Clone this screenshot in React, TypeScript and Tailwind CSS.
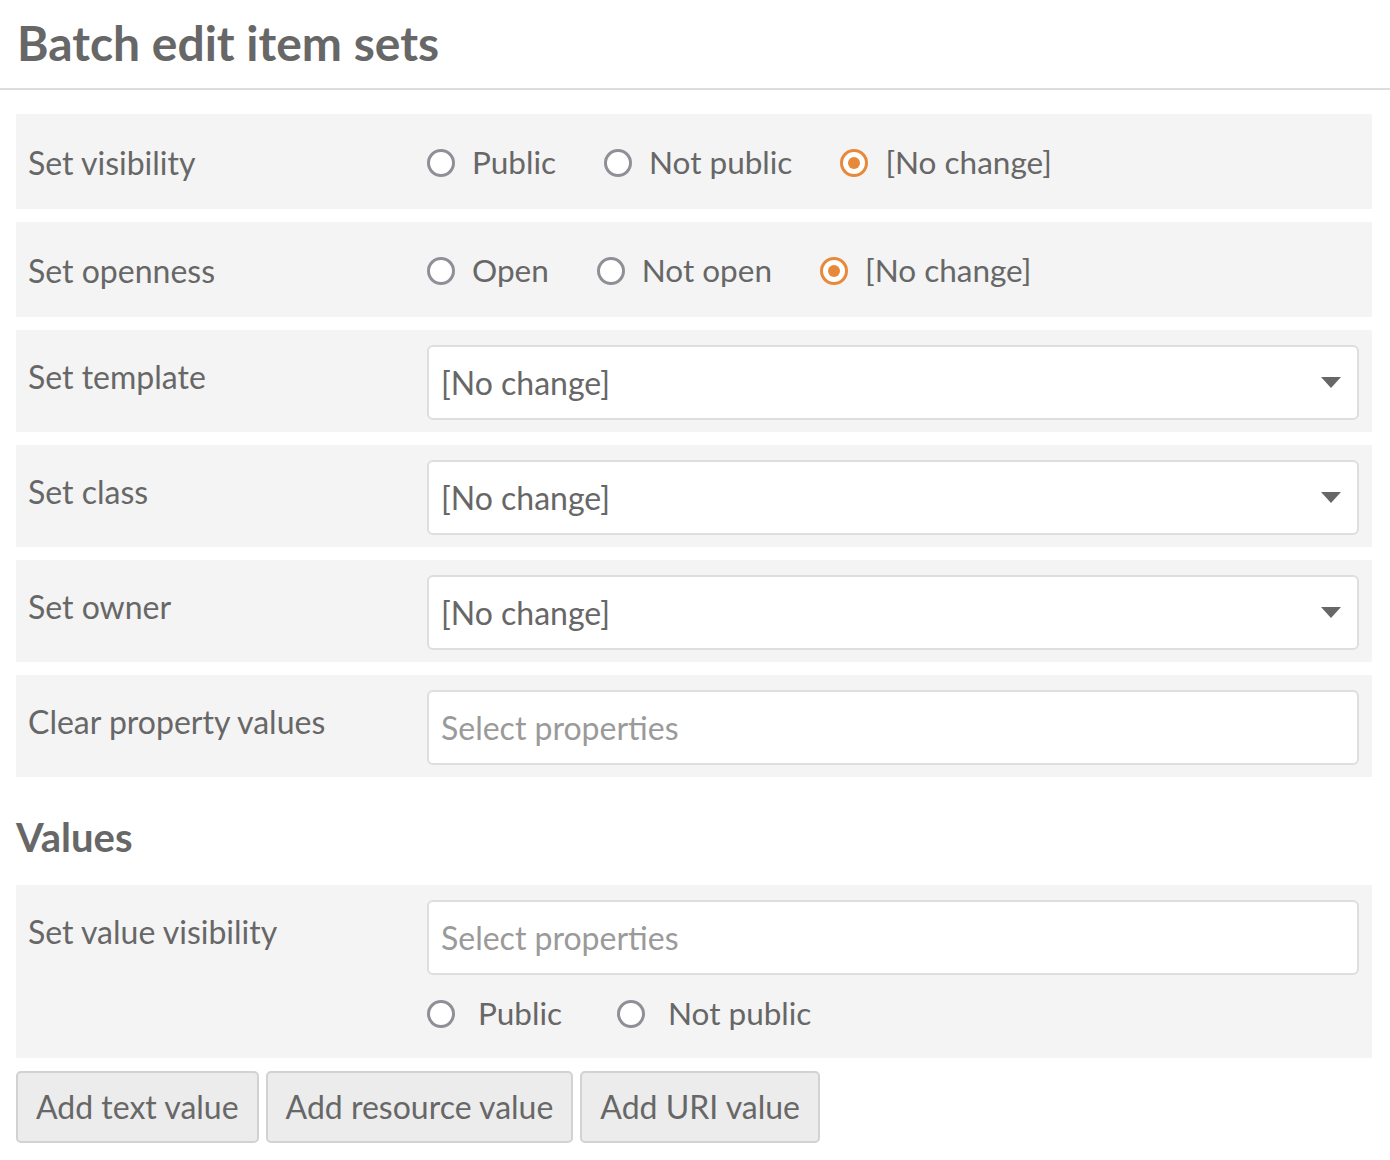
import React from 'react';

const FONT = { fontFamily: 'Lato, "Open Sans", sans-serif' };

function Radio({ label, checked, gap = 'gap-[17px]' }: { label: string; checked?: boolean; gap?: string }) {
  return (
    <label className={`flex items-center ${gap}`}>
      {checked ? (
        <span className="flex h-[28px] w-[28px] items-center justify-center rounded-full border-[3px] border-[#e8893a] bg-white">
          <span className="h-[12px] w-[12px] rounded-full bg-[#e8893a]" />
        </span>
      ) : (
        <span className="h-[28px] w-[28px] rounded-full border-[3px] border-[#8f8f98] bg-white" />
      )}
      <span className="text-[31.5px] leading-none text-[#676767]">{label}</span>
    </label>
  );
}

function Select() {
  return (
    <div className="flex h-[75px] flex-1 items-center justify-between rounded-[6px] border-2 border-[#dedede] bg-white pl-[12px] pr-[16px]">
      <span className="text-[32px] text-[#676767]">[No change]</span>
      <svg width="20" height="12" viewBox="0 0 20 12">
        <path d="M0 0 H20 L10 11 Z" fill="#676767" />
      </svg>
    </div>
  );
}

function Multi() {
  return (
    <div className="flex h-[75px] items-center rounded-[6px] border-2 border-[#dedede] bg-white pl-[12px]">
      <span className="text-[32px] text-[#9a9a9a]">Select properties</span>
    </div>
  );
}

function Row({ label, children, radio }: { label: string; children: React.ReactNode; radio?: boolean }) {
  if (radio) {
    return (
      <div className="flex h-[95px] items-center bg-[#f4f4f4] pl-[12px] pr-[13px] pt-[3px]">
        <div className="w-[399px] text-[32px] text-[#676767]">{label}</div>
        <div className="flex items-center gap-[48px]">{children}</div>
      </div>
    );
  }
  return (
    <div className="flex bg-[#f4f4f4] pb-[12px] pl-[12px] pr-[13px] pt-[15px]">
      <div className="w-[399px] pt-[14px] text-[32px] leading-[36px] text-[#676767]">{label}</div>
      <div className="flex-1">{children}</div>
    </div>
  );
}

function Button({ label }: { label: string }) {
  return (
    <button className="h-[72px] rounded-[5px] border-2 border-[#d2d2d2] bg-[#ececec] px-[18px] text-[32px] text-[#676767]">
      {label}
    </button>
  );
}

export default function App() {
  return (
    <div className="min-h-[1160px] bg-white" style={FONT}>
      <div className="border-b-2 border-[#dddddd] pb-[16px] pl-[17px] pt-[14px]">
        <h1 className="text-[48px] font-bold leading-[58px] text-[#676767]">Batch edit item sets</h1>
      </div>
      <div className="pl-[16px] pr-[18px] pt-[24px]">
        <div className="flex flex-col gap-[13px]">
          <Row label="Set visibility" radio>
            <Radio label="Public" />
            <Radio label="Not public" />
            <Radio label="[No change]" checked />
          </Row>
          <Row label="Set openness" radio>
            <Radio label="Open" />
            <Radio label="Not open" />
            <Radio label="[No change]" checked />
          </Row>
          <Row label="Set template">
            <div className="flex"><Select /></div>
          </Row>
          <Row label="Set class">
            <div className="flex"><Select /></div>
          </Row>
          <Row label="Set owner">
            <div className="flex"><Select /></div>
          </Row>
          <Row label="Clear property values">
            <Multi />
          </Row>
        </div>
        <h2 className="pb-[24px] pt-[36px] text-[40px] font-bold leading-[48px] text-[#676767]">Values</h2>
        <div className="flex bg-[#f4f4f4] pb-[28px] pl-[12px] pr-[13px] pt-[15px]">
          <div className="w-[399px] pt-[14px] text-[32px] leading-[36px] text-[#676767]">Set value visibility</div>
          <div className="flex-1">
            <Multi />
            <div className="mt-[23px] flex items-center gap-[55px]">
              <Radio label="Public" gap="gap-[23px]" />
              <Radio label="Not public" gap="gap-[23px]" />
            </div>
          </div>
        </div>
        <div className="mt-[13px] flex gap-[7px]">
          <Button label="Add text value" />
          <Button label="Add resource value" />
          <Button label="Add URI value" />
        </div>
      </div>
    </div>
  );
}
